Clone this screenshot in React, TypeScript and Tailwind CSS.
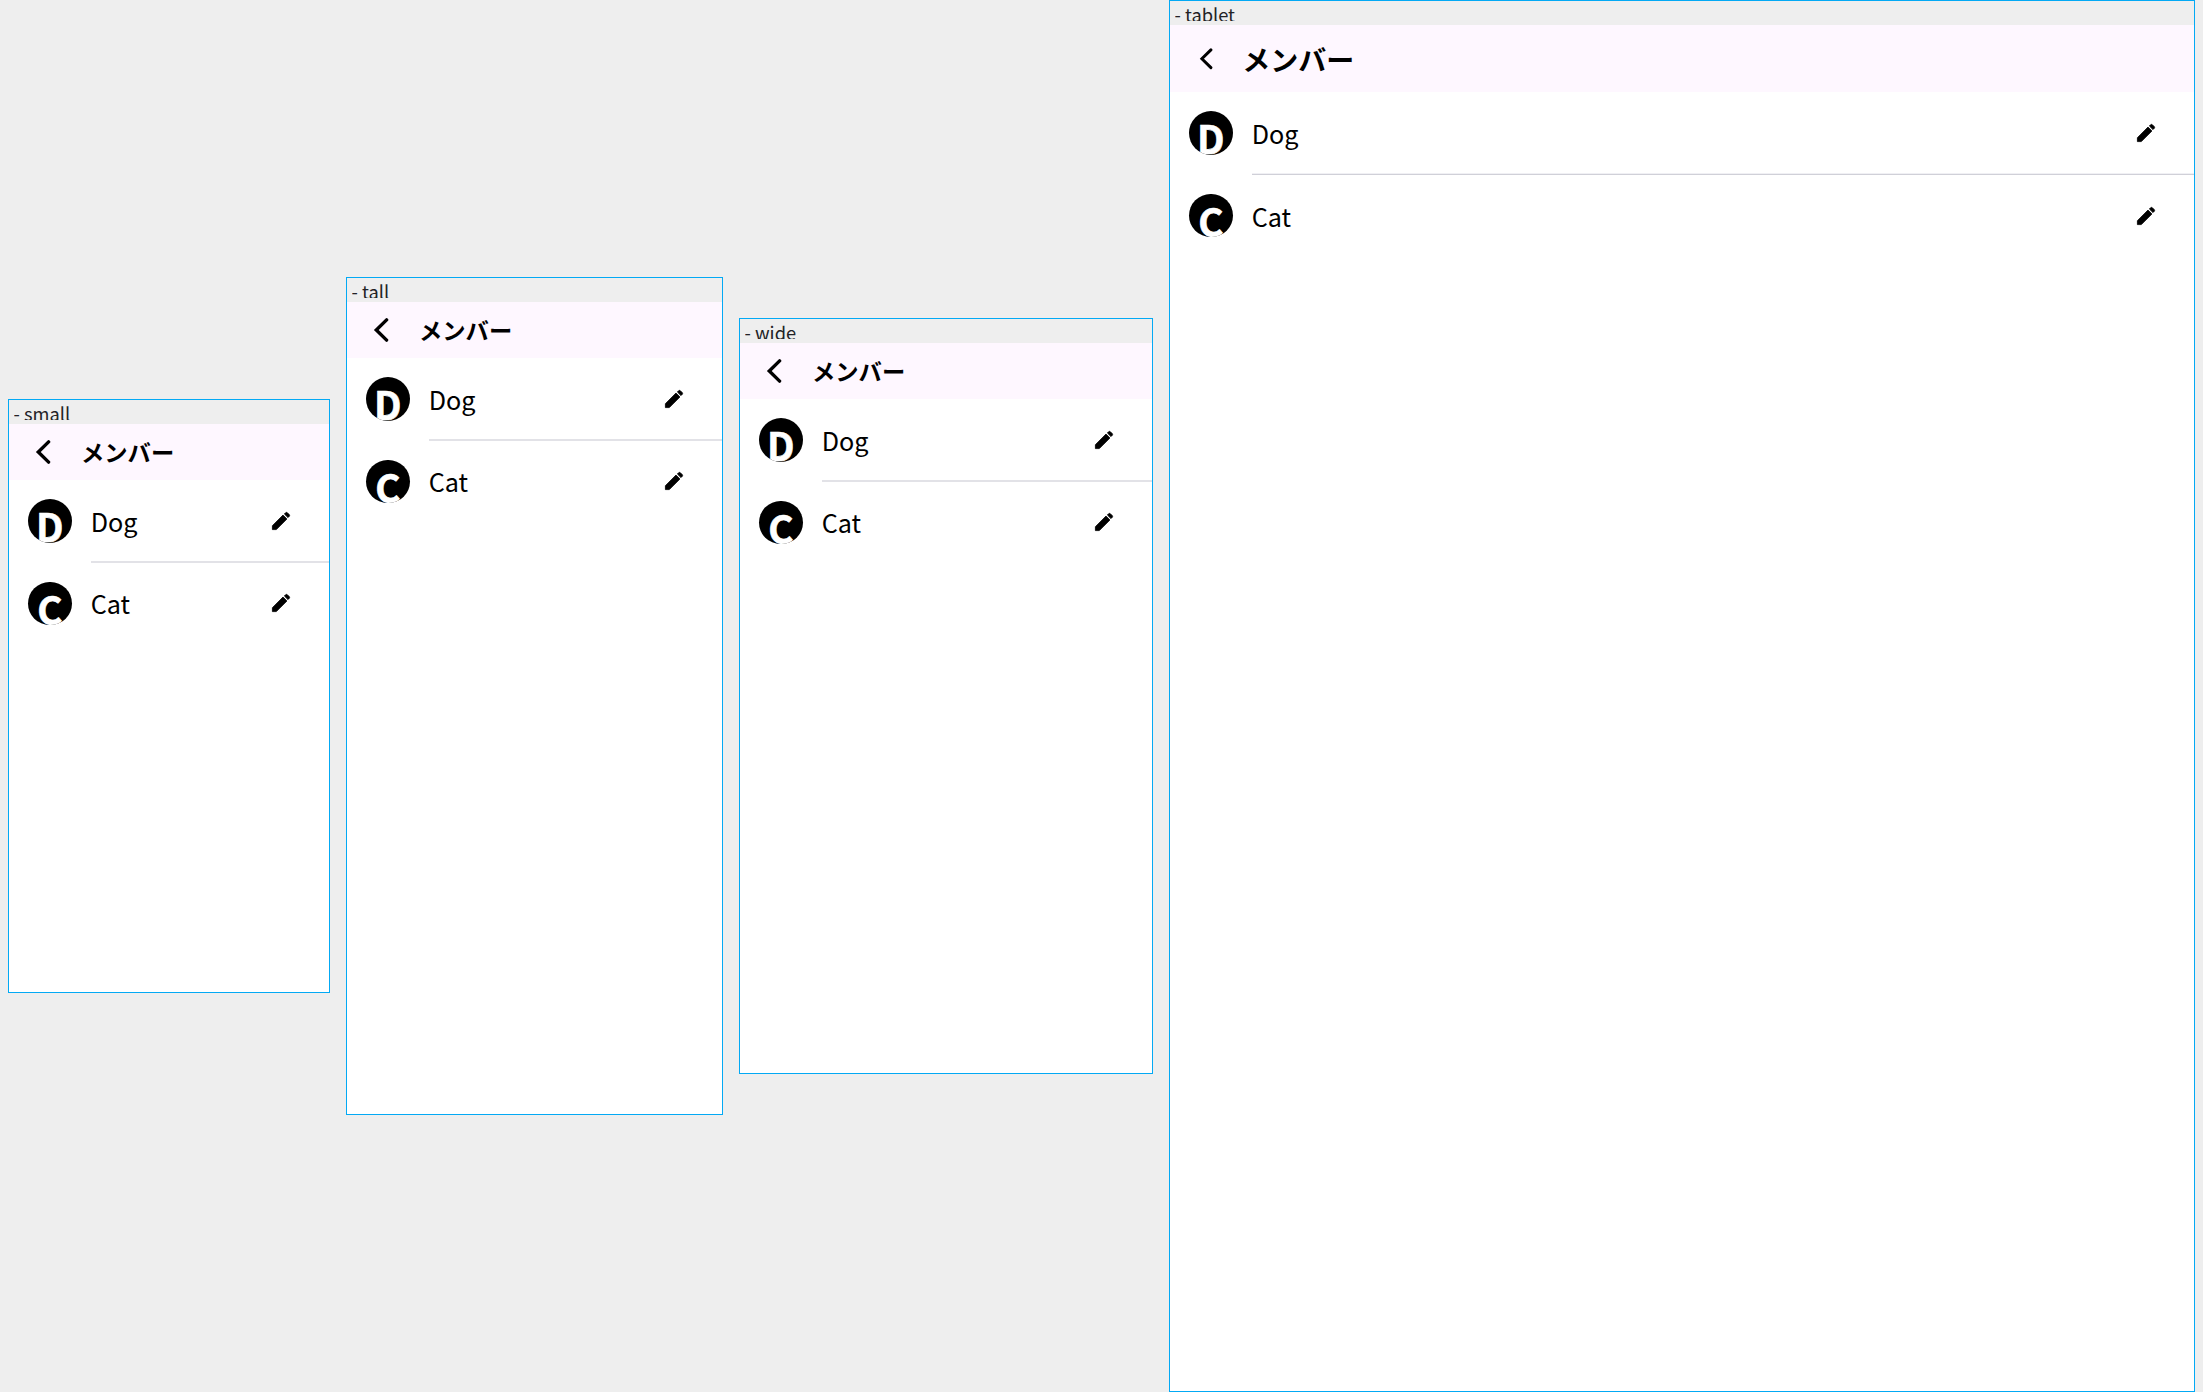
type Frame = { name: string; size: string; tablet?: boolean };

const frames: Frame[] = [
  { name: 'small', size: 'w-[322px] h-[594px]' },
  { name: 'tall', size: 'w-[377px] h-[838px]' },
  { name: 'wide', size: 'w-[414px] h-[756px]' },
  { name: 'tablet', size: 'w-[1026px] h-[1392px]', tablet: true },
];

function Pencil() {
  return (
    <svg className="mr-[36px] h-[24px] w-[24px]" viewBox="0 0 24 24" fill="black" stroke="black" strokeWidth="0.8" strokeLinejoin="round">
      <path d="M3.4 16.7v3.9h3.9L17.9 10l-3.9-3.9z" />
      <path d="M20.2 7.4a1.3 1.3 0 0 0 0-1.8l-1.8-1.8a1.3 1.3 0 0 0-1.8 0l-1.2 1.2 3.6 3.6z" />
    </svg>
  );
}

function Member({ name, tablet, divider }: { name: string; tablet?: boolean; divider?: boolean }) {
  const last = tablet ? 'pb-[1.4px]' : 'pb-[3.4px]';
  const line = tablet
    ? 'border-b border-[#d0d0d8] shadow-[inset_0_-1px_0_#f0f0f4]'
    : 'border-b-2 border-[#e2e2e7] pt-px';
  return (
    <div className="flex h-[83px] pl-[19px]">
      <div className={`${divider ? 'mt-[19px]' : 'mt-[18.67px]'} h-[43.6px] w-[43.6px] shrink-0 overflow-hidden rounded-full bg-black text-center text-[38.5px] leading-[52px] font-bold text-white [-webkit-text-stroke:0.6px_white]`}>
        {name[0]}
      </div>
      <div className={`ml-[19.1px] flex flex-1 items-center ${divider ? line : last}`}>
        <span className="flex-1 text-[25.2px] leading-[38px]">{name}</span>
        <Pencil />
      </div>
    </div>
  );
}

function Panel({ name, size, tablet }: Frame) {
  return (
    <section className={`${size} flex shrink-0 flex-col overflow-hidden border border-[#03a9f4] bg-white`}>
      <div className="h-6 shrink-0 bg-[#eeeeee] p-1 pl-[4.5px]">
        <div className="h-4 overflow-hidden text-[18.3px] leading-[19px] text-[#222226]">- {name}</div>
      </div>
      <header className={tablet ? 'flex h-[67px] items-center bg-[#fef7ff]' : 'flex h-14 items-center bg-[#fef7ff]'}>
        <svg className={tablet ? 'ml-[29px] h-[23.5px] w-[14px]' : 'ml-[26px] h-[26px] w-[16px]'} viewBox="0 0 16 26" fill="none" stroke="black" strokeWidth="3.4" strokeLinecap="round">
          <path d="M13.6 2.9 3.3 13l10.3 10.1" />
        </svg>
        <h1 className={tablet ? 'ml-[29.2px] text-[28px] leading-10 font-bold' : 'ml-[30px] text-[23.3px] leading-9 font-bold'}>メンバー</h1>
      </header>
      <Member name="Dog" tablet={tablet} divider />
      <Member name="Cat" tablet={tablet} />
    </section>
  );
}

export default function App() {
  return (
    <main className="flex h-[1392px] w-[2203px] items-center gap-4 overflow-hidden bg-[#eeeeee] px-2 font-['Noto_Sans_CJK_JP',sans-serif] text-black" lang="ja">
      {frames.map((f) => (
        <Panel key={f.name} {...f} />
      ))}
    </main>
  );
}
